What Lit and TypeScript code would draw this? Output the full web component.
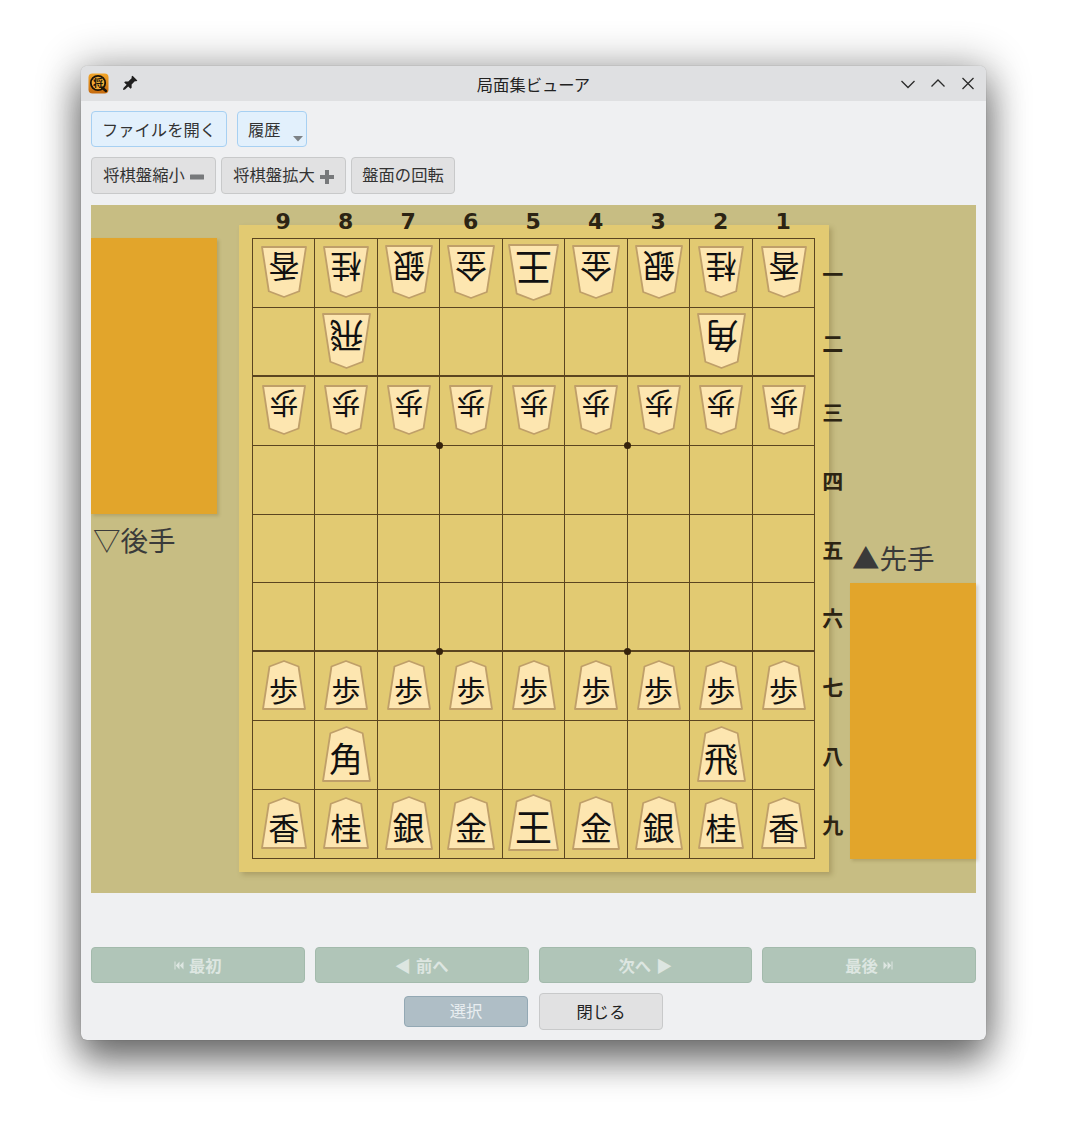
import { LitElement, html, css, svg } from "lit";
import { customElement } from "lit/decorators.js";

type Kind = "king" | "gs" | "nl" | "rb" | "p";
const KINDS: Record<string, Kind> = { 王: "king", 金: "gs", 銀: "gs", 桂: "nl", 香: "nl", 角: "rb", 飛: "rb", 歩: "p" };

const BOARD: string[] = [
  "v香 v桂 v銀 v金 v王 v金 v銀 v桂 v香",
  ". v飛 . . . . . v角 .",
  "v歩 v歩 v歩 v歩 v歩 v歩 v歩 v歩 v歩",
  ". . . . . . . . .",
  ". . . . . . . . .",
  ". . . . . . . . .",
  "歩 歩 歩 歩 歩 歩 歩 歩 歩",
  ". 角 . . . . . 飛 .",
  "香 桂 銀 金 王 金 銀 桂 香",
];
const FILES = ["9", "8", "7", "6", "5", "4", "3", "2", "1"];
const RANKS = ["一", "二", "三", "四", "五", "六", "七", "八", "九"];
const STARS = [{ cls: "s1" }, { cls: "s2" }, { cls: "s3" }, { cls: "s4" }];

@customElement("app-root")
export class AppRoot extends LitElement {
  static styles = css`
    :host {
      display: block;
      width: 1068px;
      height: 1136px;
      box-sizing: border-box;
      padding: 66px 82px 96px 81px;
      background: #fff;
      font-family: "Noto Sans CJK JP", "Noto Sans", sans-serif;
      color: #333;
      font-size: 16.3px;
    }
    .window {
      height: 974px;
      display: flex;
      flex-direction: column;
      background: #eff0f2;
      border-radius: 6px;
      box-shadow: 0 22px 36px rgba(0, 0, 0, 0.46), 0 2px 42px 4px rgba(0, 0, 0, 0.32), 0 0 1px rgba(0, 0, 0, 0.4);
      overflow: hidden;
    }
    .title {
      height: 35px;
      flex: none;
      background: #dfe0e2;
      display: grid;
      grid-template-columns: 1fr auto 1fr;
      align-items: center;
      padding: 0 10px;
      color: #222;
    }
    .tleft { display: flex; align-items: center; gap: 11px; margin-left: -3px; }
    .tleft svg { display: block; }
    .tright { display: flex; justify-content: flex-end; align-items: center; gap: 14px; }
    .tright svg { display: block; }
    .content {
      flex: 1;
      display: flex;
      flex-direction: column;
      padding: 10px;
    }
    .row { display: flex; }
    .r1 { gap: 10px; height: 36px; }
    .r2 { gap: 5px; height: 37px; margin-top: 10px; }
    .btn {
      box-sizing: border-box;
      display: flex;
      align-items: center;
      justify-content: center;
      border-radius: 4px;
      border: 1px solid #c8c9ca;
      background: #e1e1e2;
      white-space: nowrap;
      line-height: 1;
    }
    .blue { background: #e2f0fc; border-color: #a7d0f2; }
    .open { width: 136px; }
    .hist { width: 70px; justify-content: flex-start; padding: 0 3px 0 10px; }
    .hist svg { margin: auto 0 4px auto; }
    .r2 .btn { padding-bottom: 2px; }
    .shrink, .grow { width: 125px; gap: 5px; }
    .rot { width: 104px; }
    .scene {
      margin-top: 11px;
      height: 688px;
      flex: none;
      background: #c7bd83;
      display: flex;
    }
    .lcol { width: 126px; padding-top: 33px; flex: none; }
    .rcol { width: 126px; padding-top: 337px; margin-left: 21px; flex: none; }
    .stand {
      height: 276px;
      background: #e2a52b;
      box-shadow: 2px 2px 3px rgba(90, 70, 20, 0.2);
    }
    .player {
      height: 30px;
      line-height: 30px;
      font-size: 27.5px;
      color: #3a3a3a;
      white-space: nowrap;
      padding-left: 2px;
    }
    .lcol .player { margin-top: 10px; }
    .rcol .player { margin-bottom: 11px; }
    .mid { margin-left: 22px; width: 590px; flex: none; }
    .files {
      height: 20px;
      padding-left: 13px;
      display: grid;
      grid-template-columns: repeat(9, 62.5px);
      position: relative;
      z-index: 1;
    }
    .files span {
      text-align: center;
      font-family: "DejaVu Sans", sans-serif;
      font-weight: 700;
      font-size: 22px;
      line-height: 34px;
      height: 34px;
      color: #2c2413;
    }
    .frame {
      height: 647px;
      box-sizing: border-box;
      background: #e2ca72;
      padding: 13px 0 0 13px;
      display: flex;
      box-shadow: 3px 3px 5px rgba(90, 70, 20, 0.25);
    }
    .grid {
      position: relative;
      box-sizing: border-box;
      width: 563.25px;
      height: 621px;
      flex: none;
      display: grid;
      grid-template-columns: 62.25px repeat(8, 62.5px);
      grid-template-rows: repeat(9, 68.9px);
      border-top: 1px solid #5b4520;
      border-left: 1px solid #5b4520;
    }
    .cell {
      box-sizing: border-box;
      border-right: 1px solid #5b4520;
      border-bottom: 1px solid #5b4520;
      padding-bottom: 3px;
      display: flex;
      align-items: center;
      justify-content: center;
    }
    .cell.upper { padding-bottom: 1px; }
    .cell.thick { border-bottom-width: 2px; }
    .star {
      position: absolute;
      width: 7px;
      height: 7px;
      border-radius: 50%;
      background: #35220c;
    }
    .s1 { left: 183px; top: 203px; }
    .s2 { left: 371px; top: 203px; }
    .s3 { left: 183px; top: 409px; }
    .s4 { left: 371px; top: 409px; }
    .ranks {
      width: 14px;
      flex: none;
      height: 621px;
      display: grid;
      grid-template-rows: repeat(9, 68.9px);
    }
    .ranks span {
      width: 35px;
      text-align: center;
      font-weight: 700;
      font-size: 21px;
      line-height: 68.9px;
      padding-top: 1px;
      height: 68.9px;
      color: #2c2413;
    }
    .piece { display: grid; flex: none; }
    .piece > * { grid-area: 1 / 1; }
    .piece svg { display: block; }
    .piece.up { transform: rotate(180deg); }
    .piece .ch {
      display: flex;
      align-items: center;
      justify-content: center;
      color: #111;
      line-height: 1;
    }
    .king { width: 51px; height: 57px; }
    .king .ch { font-size: 37px; padding-top: 7px; }
    .gs { width: 48px; height: 54px; }
    .gs .ch { font-size: 32px; padding-top: 7px; }
    .nl { width: 46px; height: 52px; }
    .nl .ch { font-size: 31px; padding-top: 7px; }
    .rb { width: 49px; height: 56px; }
    .rb .ch { font-size: 34px; padding-top: 8px; }
    .p { width: 44px; height: 50px; }
    .p .ch { font-size: 29px; padding-top: 10px; }
    .spacer { flex: 1; }
    .nav {
      display: grid;
      grid-template-columns: repeat(4, 1fr);
      gap: 10px;
      height: 36px;
    }
    .nav .btn {
      background: #b0c5b8;
      border-color: #a3baac;
      color: #dde6e1;
      font-weight: 700;
      gap: 5px;
    }
    .bottom {
      display: flex;
      justify-content: center;
      align-items: center;
      gap: 11px;
      margin-top: 10px;
      height: 37px;
    }
    .select {
      width: 124px;
      height: 31px;
      background: #afbec6;
      border-color: #93a8b4;
      color: #e9eef1;
      padding-bottom: 2px;
    }
    .close { width: 124px; height: 37px; color: #222; padding-bottom: 1px; }
  `;

  private piece(code: string) {
    const up = code.startsWith("v");
    const ch = up ? code.slice(1) : code;
    const kind = KINDS[ch];
    const dims: Record<Kind, [number, number]> = { king: [51, 57], gs: [48, 54], nl: [46, 52], rb: [49, 56], p: [44, 50] };
    const [w, h] = dims[kind];
    const pts = `1,${h - 1} ${w * 0.17},${h * 0.13} ${w / 2},1 ${w * 0.83},${h * 0.13} ${w - 1},${h - 1}`;
    return html`<div class="piece ${kind} ${up ? "up" : ""}">
      <svg width=${w} height=${h} viewBox="0 0 ${w} ${h}">
        ${svg`<polygon points=${pts} fill="#fde6b0" stroke="#bf9f69" stroke-width="1.8" stroke-linejoin="round"></polygon>`}
      </svg>
      <div class="ch">${ch}</div>
    </div>`;
  }

  private skipIcon(flip: boolean) {
    return html`<svg width="10" height="9" viewBox="0 0 10 9" style=${flip ? "transform:scaleX(-1)" : ""}>
      <path d="M0.5 0.5h1v8h-1zM5.5 0.5v8L1.8 4.5zM9.5 0.5v8L5.8 4.5z" fill="#dde6e1"></path>
    </svg>`;
  }

  render() {
    const rows = BOARD.map((r) => r.split(" "));
    return html`
      <div class="window">
        <div class="title">
          <div class="tleft">
            <svg width="21" height="21" viewBox="0 0 21 21">
              <defs>
                <linearGradient id="ic" x1="0" y1="0" x2="0" y2="1">
                  <stop offset="0" stop-color="#f2a62a"></stop>
                  <stop offset="1" stop-color="#c56a0e"></stop>
                </linearGradient>
              </defs>
              <rect x="0.5" y="0.5" width="20" height="20" rx="4" fill="url(#ic)"></rect>
              <circle cx="10" cy="10" r="7.2" fill="#f0aa34" stroke="#1c1408" stroke-width="1.8"></circle>
              <path d="M14 14.5l4 3.5" stroke="#1c1408" stroke-width="2.4" stroke-linecap="round"></path>
              <text x="10" y="13.6" font-size="10" text-anchor="middle" font-weight="700" fill="#1c1408" font-family="Noto Sans CJK JP">将</text>
            </svg>
            <svg width="18" height="18" viewBox="0 0 16 16">
              <path transform="rotate(45 8 8)" d="M5 0.5h6v1.2l-1 1v4l2 2v1.300H9v4l-1 1.500-1-1.500v-4H4V9l2-2V2.700l-1-1z" fill="#1f1f1f"></path>
            </svg>
          </div>
          <div>局面集ビューア</div>
          <div class="tright">
            <svg width="16" height="16" viewBox="0 0 16 16"><path d="M1.500 5l6.500 6.500L14.500 5" fill="none" stroke="#2b2b2b" stroke-width="1.300"></path></svg>
            <svg width="16" height="16" viewBox="0 0 16 16"><path d="M1.500 10.500L8 4l6.500 6.500" fill="none" stroke="#2b2b2b" stroke-width="1.300"></path></svg>
            <svg width="16" height="16" viewBox="0 0 16 16"><path d="M2.500 2l11 11M13.500 2l-11 11" fill="none" stroke="#2b2b2b" stroke-width="1.300"></path></svg>
          </div>
        </div>
        <div class="content">
          <div class="row r1">
            <div class="btn blue open">ファイルを開く</div>
            <div class="btn blue hist">
              <span>履歴</span>
              <svg width="10" height="6" viewBox="0 0 10 6"><path d="M0 0h10L5 5.500z" fill="#7d8286"></path></svg>
            </div>
          </div>
          <div class="row r2">
            <div class="btn shrink">
              <span>将棋盤縮小</span>
              <svg width="14" height="6" viewBox="0 0 14 6" style="margin-top:5px"><rect width="14" height="5" y="0.500" rx="0.500" fill="#77797b"></rect></svg>
            </div>
            <div class="btn grow">
              <span>将棋盤拡大</span>
              <svg width="14" height="14" viewBox="0 0 14 14" style="margin-top:5px"><path d="M5 0h4v5h5v4H9v5H5V9H0V5h5z" fill="#77797b"></path></svg>
            </div>
            <div class="btn rot">盤面の回転</div>
          </div>
          <div class="scene">
            <div class="lcol">
              <div class="stand"></div>
              <div class="player">▽後手</div>
            </div>
            <div class="mid">
              <div class="files">${FILES.map((f) => html`<span>${f}</span>`)}</div>
              <div class="frame">
                <div class="grid">
                  ${rows.map((r, i) =>
                    r.map(
                      (c) => html`<div class="cell ${i === 1 || i === 5 ? "thick" : ""} ${i < 3 ? "upper" : ""}">${c === "." ? "" : this.piece(c)}</div>`
                    )
                  )}
                  ${STARS.map((s) => html`<div class="star ${s.cls}"></div>`)}
                </div>
                <div class="ranks">${RANKS.map((r) => html`<span>${r}</span>`)}</div>
              </div>
            </div>
            <div class="rcol">
              <div class="player">▲先手</div>
              <div class="stand"></div>
            </div>
          </div>
          <div class="spacer"></div>
          <div class="nav">
            <div class="btn">${this.skipIcon(false)}<span>最初</span></div>
            <div class="btn"><span>◀</span><span>前へ</span></div>
            <div class="btn"><span>次へ</span><span>▶</span></div>
            <div class="btn"><span>最後</span>${this.skipIcon(true)}</div>
          </div>
          <div class="bottom">
            <div class="btn select">選択</div>
            <div class="btn close">閉じる</div>
          </div>
        </div>
      </div>
    `;
  }
}
